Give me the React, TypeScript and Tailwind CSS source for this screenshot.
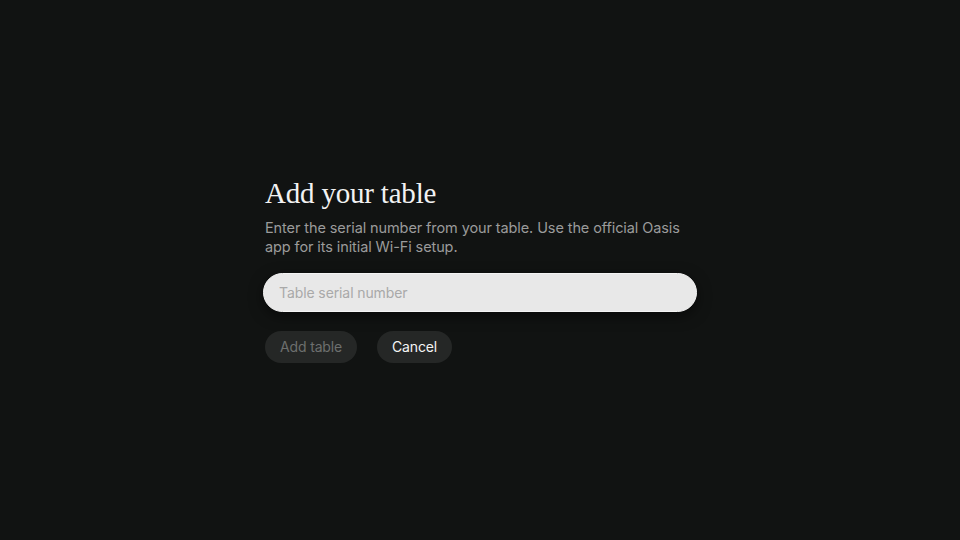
import React from "react";

export default function App() {
  return (
    <div className="w-full h-screen bg-[#111312] flex items-center justify-center" style={{ fontFamily: "Inter, 'Noto Sans', sans-serif" }}>
      <div className="w-[434px] flex flex-col pb-[2px]">
        <h1 className="text-[29px] leading-[34px] text-[#f2f2f2] pl-[2px] tracking-[-0.2px]" style={{ fontFamily: "'Liberation Serif', 'DejaVu Serif', serif" }}>
          Add your table
        </h1>
        <p className="mt-[8px] pl-[2px] pr-[10px] text-[14.5px] leading-[19px] tracking-[-0.1px] text-[#9b9b9b]">
          Enter the serial number from your table. Use the official Oasis app for its initial Wi-Fi setup.
        </p>
        <input
          placeholder="Table serial number"
          className="mt-[17px] h-[39px] w-full rounded-full bg-[#e8e8e8] border border-[#f4f4f4] px-[15px] text-[14px] tracking-[-0.1px] text-[#222] placeholder:text-[#a9a9a9] outline-none shadow-[0_4px_14px_rgba(0,0,0,0.5)]"
        />
        <div className="mt-[19px] flex gap-[20px] pl-[2px]">
          <button className="h-[32px] px-[15px] rounded-full bg-[#252726] text-[14px] tracking-[-0.15px] text-[#6d6f6e]">Add table</button>
          <button className="h-[32px] px-[15px] rounded-full bg-[#252726] text-[14px] tracking-[-0.15px] text-[#f4f4f4]">Cancel</button>
        </div>
      </div>
    </div>
  );
}
